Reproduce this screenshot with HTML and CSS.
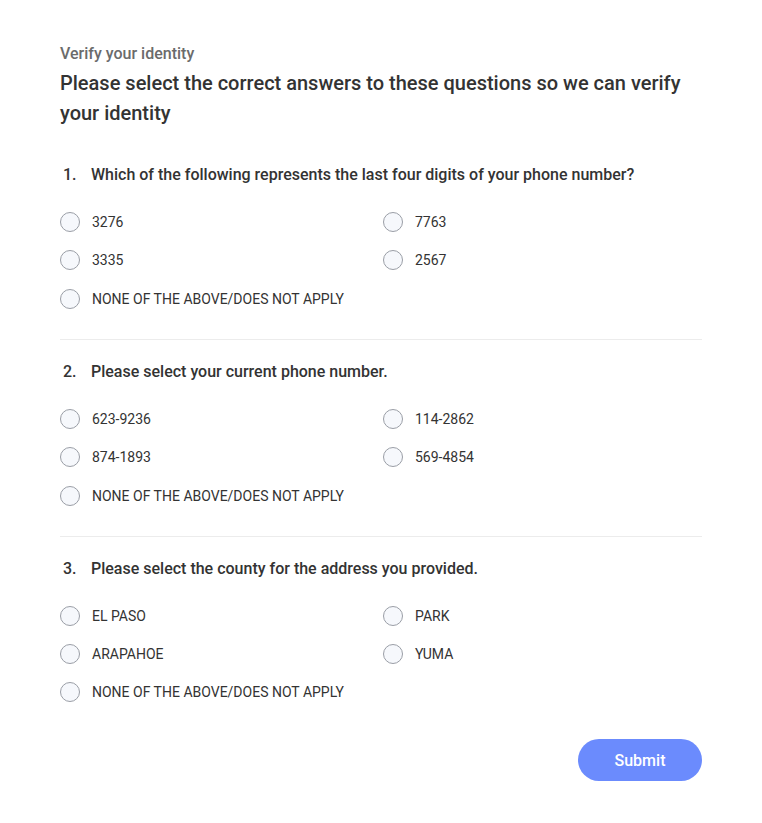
FILE: index.html
```html
<!DOCTYPE html>
<html lang="en">
<head>
<meta charset="utf-8">
<title>Verify your identity</title>
<link rel="stylesheet" href="styles.css">
</head>
<body>
<main class="page">
  <p class="eyebrow">Verify your identity</p>
  <h1 class="title">Please select the correct answers to these questions so we can verify your identity</h1>

  <section class="question">
    <h2 class="q-text"><span class="q-num">1.</span>Which of the following represents the last four digits of your phone number?</h2>
    <div class="options">
      <label class="option"><span class="radio"></span>3276</label>
      <label class="option"><span class="radio"></span>7763</label>
      <label class="option"><span class="radio"></span>3335</label>
      <label class="option"><span class="radio"></span>2567</label>
      <label class="option full"><span class="radio"></span>NONE OF THE ABOVE/DOES NOT APPLY</label>
    </div>
  </section>

  <section class="question">
    <h2 class="q-text"><span class="q-num">2.</span>Please select your current phone number.</h2>
    <div class="options">
      <label class="option"><span class="radio"></span>623-9236</label>
      <label class="option"><span class="radio"></span>114-2862</label>
      <label class="option"><span class="radio"></span>874-1893</label>
      <label class="option"><span class="radio"></span>569-4854</label>
      <label class="option full"><span class="radio"></span>NONE OF THE ABOVE/DOES NOT APPLY</label>
    </div>
  </section>

  <section class="question last">
    <h2 class="q-text"><span class="q-num">3.</span>Please select the county for the address you provided.</h2>
    <div class="options">
      <label class="option"><span class="radio"></span>EL PASO</label>
      <label class="option"><span class="radio"></span>PARK</label>
      <label class="option"><span class="radio"></span>ARAPAHOE</label>
      <label class="option"><span class="radio"></span>YUMA</label>
      <label class="option full"><span class="radio"></span>NONE OF THE ABOVE/DOES NOT APPLY</label>
    </div>
  </section>

  <div class="actions">
    <button class="submit" type="button">Submit</button>
  </div>
</main>
</body>
</html>
```

FILE: styles.css
```css
* { box-sizing: border-box; }
html, body { margin: 0; padding: 0; background: #fff; }
body {
  font-family: Roboto, "Liberation Sans", Arial, sans-serif;
  color: #333;
}
.page {
  width: 762px;
  padding: 44px 60px 40px;
}
.eyebrow {
  margin: 0;
  font-size: 16px;
  line-height: 20px;
  font-weight: 500;
  color: #6b6b6b;
}
.title {
  margin: 4px 0 0;
  font-size: 20px;
  line-height: 30px;
  font-weight: 500;
  color: #333;
}
.question {
  padding: 22px 0 30px;
  border-bottom: 1px solid #ececec;
}
.question:first-of-type { margin-top: 15px; }
.question.last { border-bottom: none; padding-bottom: 37px; }
.q-text {
  display: flex;
  margin: 0 0 27px;
  font-size: 16px;
  line-height: 20px;
  font-weight: 500;
  color: #333;
}
.q-num {
  width: 31px;
  padding-left: 3px;
  flex: none;
}
.options {
  display: grid;
  grid-template-columns: 323px 1fr;
  row-gap: 18.4px;
}
.option {
  display: flex;
  align-items: center;
  gap: 12px;
  height: 20px;
  font-size: 14px;
  color: #333;
}
.option.full { grid-column: 1 / -1; }
.radio {
  width: 20px;
  height: 20px;
  flex: none;
  border-radius: 50%;
  border: 1px solid #9a9ea6;
  background: #f6f8fc;
}
.actions {
  display: flex;
  justify-content: flex-end;
}
.submit {
  width: 124px;
  height: 42px;
  border: none;
  border-radius: 21px;
  background: #6b8bfd;
  color: #fff;
  font-family: Roboto, "Liberation Sans", Arial, sans-serif;
  font-size: 16px;
  font-weight: 500;
}
```
